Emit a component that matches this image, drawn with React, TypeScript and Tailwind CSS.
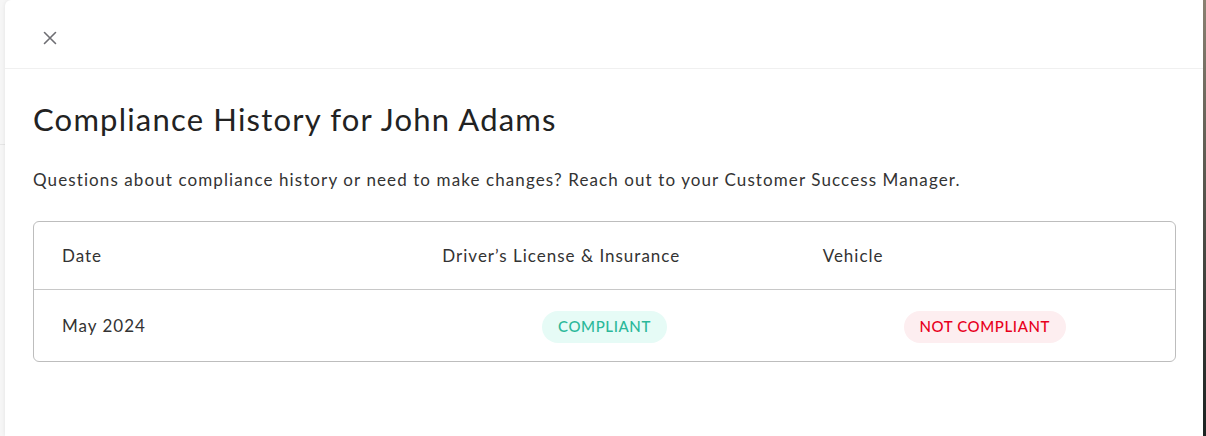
import React from "react";

const font = { fontFamily: '"Lato", "Noto Sans", sans-serif' };

export default function App() {
  return (
    <div className="flex h-[436px] w-[1206px] bg-[#f6f6f6]" style={font}>
      <div className="w-[5px] shrink-0 flex flex-col">
        <div className="h-[145px] border-b border-[#e6e6e6]" />
      </div>
      <div className="flex-1 bg-white rounded-tl-[6px] shadow-[0_0_4px_rgba(0,0,0,0.08)] flex flex-col">
        <div className="h-[69px] border-b border-[#f0f0f0] flex items-start pt-[31px] pl-[38px]">
          <svg width="14" height="14" viewBox="0 0 14 14" fill="none">
            <path d="M1.5 1.5L12.5 12.5M12.5 1.5L1.5 12.5" stroke="#6e6e73" strokeWidth="1.6" strokeLinecap="round" />
          </svg>
        </div>
        <div className="pl-[28px] pr-[27px]">
          <h1 className="mt-[30px] text-[31px] leading-[40px] tracking-[1.2px] text-[#222222] font-normal">
            Compliance History for John Adams
          </h1>
          <p className="mt-[29px] text-[17px] leading-[24px] tracking-[1.1px] text-[#333333]">
            Questions about compliance history or need to make changes? Reach out to your Customer Success Manager.
          </p>
          <div className="mt-[29px] border border-[#bdbdbd] rounded-[6px]">
            <div className="grid grid-cols-3 h-[68px] items-center border-b border-[#c8c8c8] text-[17px] tracking-[1px] text-[#333333]">
              <div className="px-7">Date</div>
              <div className="px-7">Driver’s License &amp; Insurance</div>
              <div className="px-7">Vehicle</div>
            </div>
            <div className="grid grid-cols-3 h-[71px] items-center text-[17px] tracking-[1px] text-[#333333]">
              <div className="px-7">May 2024</div>
              <div className="flex justify-center pt-[2px]">
                <span className="h-[32px] px-4 rounded-full bg-[#e6fbf6] text-[#2bb89a] text-[15px] font-medium flex items-center tracking-[0.6px]">
                  COMPLIANT
                </span>
              </div>
              <div className="flex justify-center pt-[2px]">
                <span className="h-[32px] px-4 rounded-full bg-[#fdeef0] text-[#e8001c] text-[15px] font-medium flex items-center tracking-[0.6px]">
                  NOT COMPLIANT
                </span>
              </div>
            </div>
          </div>
        </div>
      </div>
      <div className="w-[3px] shrink-0 bg-gradient-to-b from-[#8a8172] to-[#1c2322]" />
    </div>
  );
}
